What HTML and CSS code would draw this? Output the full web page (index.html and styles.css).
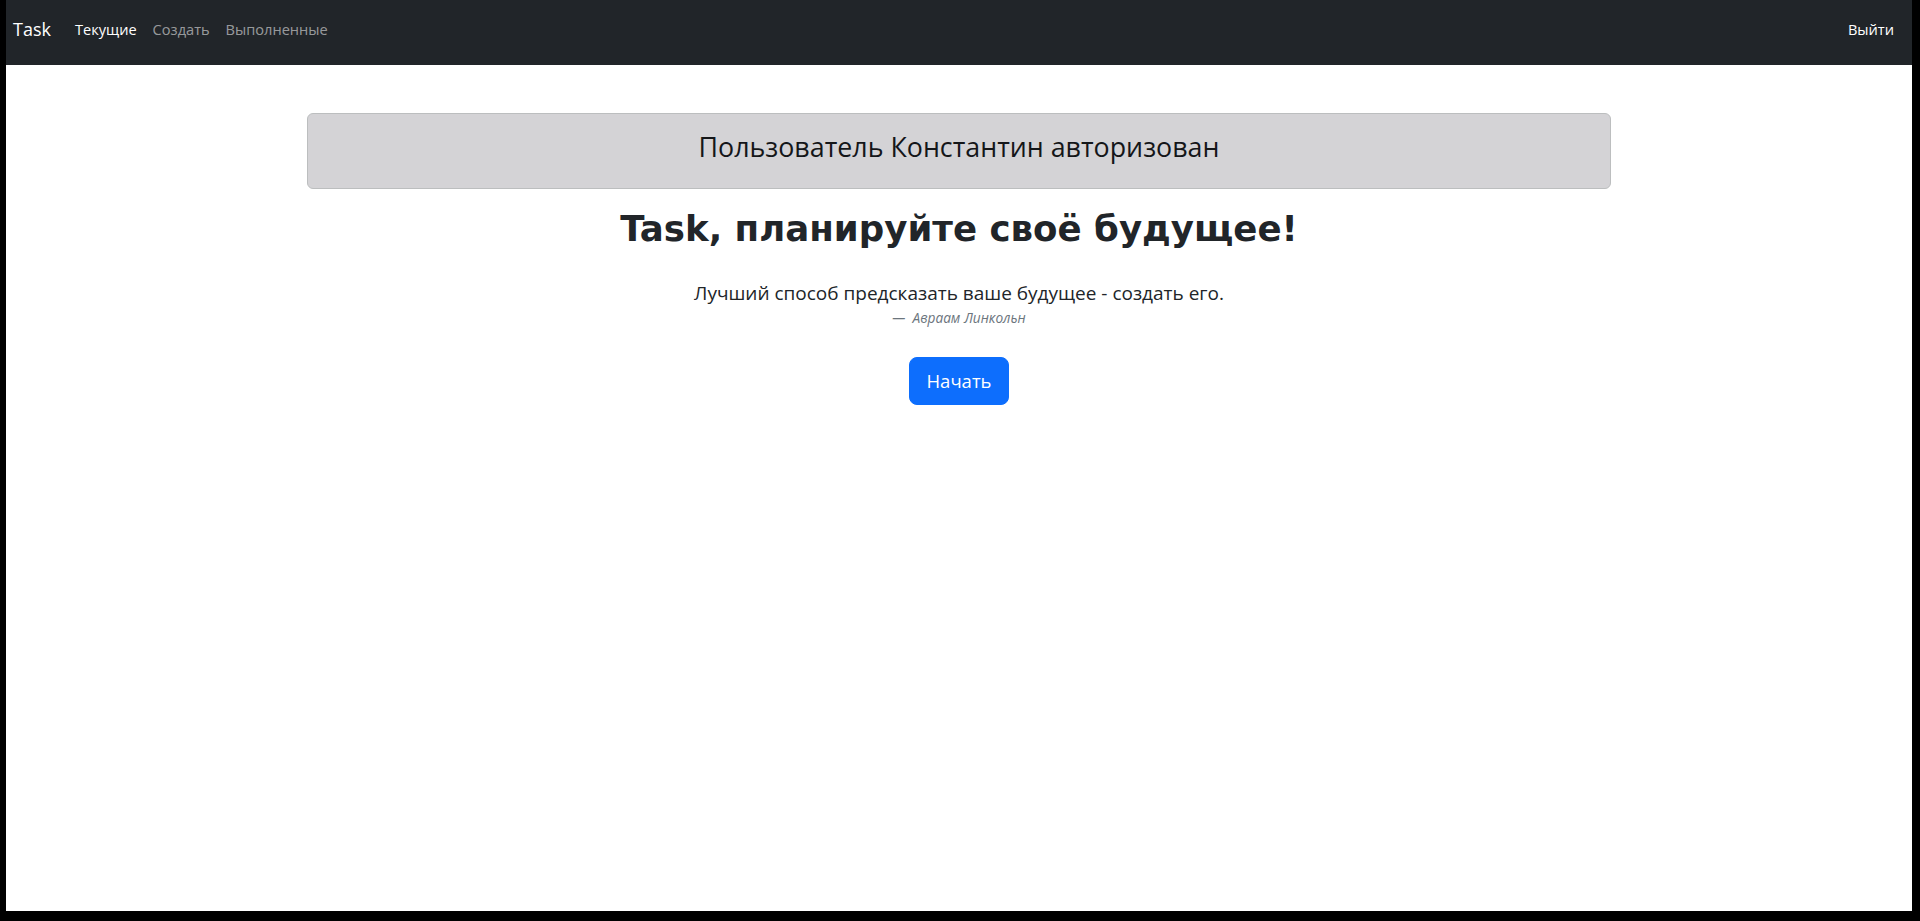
FILE: index.html
```html
<!DOCTYPE html>
<html lang="ru">
<head>
<meta charset="utf-8">
<title>Task</title>
<link rel="stylesheet" href="styles.css">
</head>
<body>
<div class="screen">
  <nav class="navbar">
    <div class="nav-left">
      <a class="brand" href="#">Task</a>
      <a class="nav-link active" href="#">Текущие</a>
      <a class="nav-link" href="#">Создать</a>
      <a class="nav-link" href="#">Выполненные</a>
    </div>
    <a class="nav-link active logout" href="#">Выйти</a>
  </nav>
  <main class="container">
    <div class="alert">
      <h3 class="alert-title">Пользователь Константин авторизован</h3>
    </div>
    <h1 class="hero-title">Task, планируйте своё будущее!</h1>
    <figure class="quote">
      <blockquote class="lead">Лучший способ предсказать ваше будущее - создать его.</blockquote>
      <figcaption class="quote-footer">—&nbsp; Авраам Линкольн</figcaption>
    </figure>
    <a class="btn" href="#">Начать</a>
  </main>
</div>
</body>
</html>
```

FILE: styles.css
```css
html, body {
  margin: 0;
  padding: 0;
  background: #000;
  height: 921px;
  overflow: hidden;
}

.screen {
  margin-left: 6px;
  width: 1906px;
  height: 911px;
  background: #fff;
  font-family: "Open Sans", "Noto Sans", sans-serif;
  color: #212529;
  overflow: hidden;
}

.navbar {
  height: 65px;
  background: #212529;
  display: flex;
  align-items: center;
  justify-content: space-between;
  padding: 0 18px 7px 7px;
  box-sizing: border-box;
}

.nav-left {
  display: flex;
  align-items: center;
}

.brand {
  font-size: 18px;
  color: #fff;
  text-decoration: none;
  margin-right: 16px;
}

.nav-link {
  font-size: 14.6px;
  color: rgba(255, 255, 255, 0.55);
  text-decoration: none;
  padding: 0 8px;
}

.nav-link.active {
  color: #fff;
}

.logout {
  padding: 0;
}

.container {
  width: 1304px;
  margin: 48px auto 0;
  display: flex;
  flex-direction: column;
  align-items: center;
}

.alert {
  align-self: stretch;
  background: #d4d3d6;
  border: 1px solid #bcbebf;
  border-radius: 6px;
  padding: 16px 16px;
  text-align: center;
  color: #141619;
}

.alert-title {
  margin: 0 0 8px;
  font-size: 26.8px;
  font-weight: 400;
  line-height: 34px;
}

.hero-title {
  margin: 19px 0 0;
  font-family: "DejaVu Sans", Verdana, sans-serif;
  font-weight: 700;
  font-size: 35.6px;
  line-height: 1.2;
  color: #212529;
}

.quote {
  margin: 30px 0 0;
  text-align: center;
}

.lead {
  margin: 0;
  font-size: 19px;
  font-weight: 400;
  line-height: 24px;
}

.quote-footer {
  margin: 2.5px 0 0;
  font-size: 13.7px;
  font-style: italic;
  line-height: 21px;
  color: #6c757d;
}

.btn {
  margin-top: 29px;
  display: inline-block;
  background: #0d6efd;
  color: #fff;
  text-decoration: none;
  font-size: 18.5px;
  line-height: 30px;
  padding: 8px 16px;
  border: 1px solid #0d6efd;
  border-radius: 8px;
}
```
